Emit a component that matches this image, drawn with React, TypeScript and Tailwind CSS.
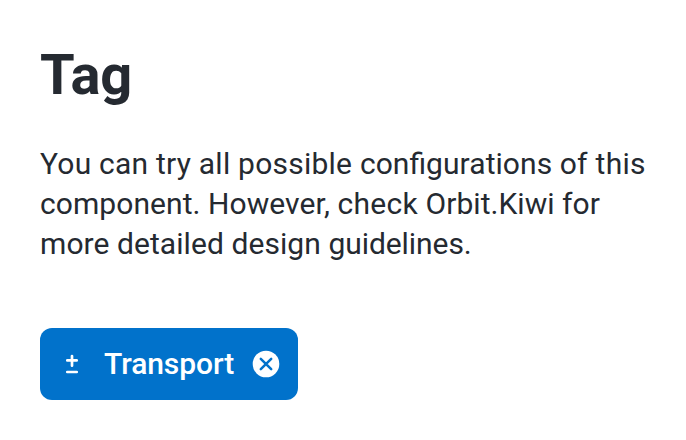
export default function App() {
  return (
    <main className="flex h-[440px] flex-col items-start bg-white px-10 pt-[41px] font-[Roboto,sans-serif] text-[#252a31]">
      <h1 className="text-[56px] font-bold leading-[68px] tracking-[-0.2px]">Tag</h1>
      <p className="mt-[35px] text-[30px] leading-10 whitespace-nowrap [font-feature-settings:'liga']">
        <span className="tracking-[0.23px]">You can try all possible </span>
        <span className="tracking-[0.06px]">configurations </span>
        <span className="tracking-[0.28px]">of this</span>
        <br />
        <span className="tracking-[0.07px]">component. However, </span>
        <span className="tracking-[0.28px]">check </span>
        <span className="tracking-[0.04px]">Orbit.Kiwi for</span>
        <br />
        <span className="tracking-[0.07px]">more detailed design </span>
        <span className="tracking-[-0.06px]">guidelines.</span>
      </p>
      <div className="mt-16 flex h-[72px] w-[258px] items-center rounded-xl bg-[#0172cb] pl-4 text-white">
        <svg
          className="size-8"
          viewBox="0 0 32 32"
          fill="none"
          stroke="currentColor"
          strokeLinecap="round"
          strokeWidth="2.7"
        >
          <path d="M11.3 12.4h9.4M16 8v9.7" />
          <path d="M11.2 24h9.6" strokeWidth="2.5" />
        </svg>
        <span className="ml-4 w-[130px] text-[30px] font-medium leading-10 tracking-[-0.08px]">Transport</span>
        <button className="ml-4 size-8" aria-label="Remove">
          <svg className="size-8" viewBox="0 0 32 32">
            <circle cx="16" cy="16" r="13.3" fill="white" />
            <path d="m10.8 10.8 10.4 10.4m0-10.4-10.4 10.4" stroke="#0172cb" strokeLinecap="round" strokeWidth="2.5" />
          </svg>
        </button>
      </div>
    </main>
  );
}
